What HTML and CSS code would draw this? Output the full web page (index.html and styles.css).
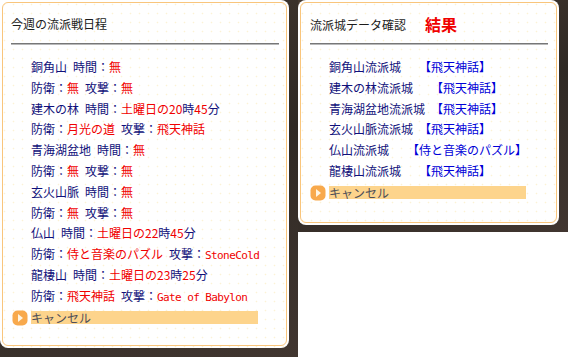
FILE: index.html
```html
<!DOCTYPE html>
<html lang="ja">
<head>
    <meta charset="UTF-8">
    <title>流派戦日程</title>
    <link rel="stylesheet" href="styles.css">
</head>
<body>

<div class="stage">
    <!-- 今週の流派戦日程 -->
    <div class="frame frame-left">
        <div class="window window-left">
            <div class="window-inner">
                <div class="window-title">今週の流派戦日程</div>
                <div class="rule"></div>
                <ul class="rows">
                    <li><span class="name">銅角山</span>&ensp;時間：<span class="red">無</span></li>
                    <li>防衛：<span class="red">無</span>&ensp;攻撃：<span class="red">無</span></li>
                    <li>建木の林&ensp;時間：<span class="red">土曜日の20</span>時<span class="red">45</span>分</li>
                    <li>防衛：<span class="red">月光の道</span>&ensp;攻撃：<span class="red">飛天神話</span></li>
                    <li>青海湖盆地&ensp;時間：<span class="red">無</span></li>
                    <li>防衛：<span class="red">無</span>&ensp;攻撃：<span class="red">無</span></li>
                    <li>玄火山脈&ensp;時間：<span class="red">無</span></li>
                    <li>防衛：<span class="red">無</span>&ensp;攻撃：<span class="red">無</span></li>
                    <li>仏山&ensp;時間：<span class="red">土曜日の22</span>時<span class="red">45</span>分</li>
                    <li>防衛：<span class="red">侍と音楽のパズル</span>&ensp;攻撃：<span class="red mono">StoneCold</span></li>
                    <li>龍棲山&ensp;時間：<span class="red">土曜日の23</span>時<span class="red">25</span>分</li>
                    <li>防衛：<span class="red">飛天神話</span>&ensp;攻撃：<span class="red mono">Gate of Babylon</span></li>
                </ul>
                <div class="cancel">
                    <span class="cancel-icon">
                        <svg width="16" height="16" viewBox="0 0 16 16">
                            <rect x="0.5" y="0.5" width="15" height="15" rx="5" fill="#f8a94c"/>
                            <path d="M6 4 L11 8 L6 12 Z" fill="#fff4e0"/>
                        </svg>
                    </span>
                    <span class="cancel-bar cancel-bar-wide">キャンセル</span>
                </div>
            </div>
        </div>
    </div>

    <!-- 流派城データ確認 -->
    <div class="frame frame-right">
        <div class="window window-right">
            <div class="window-inner">
                <div class="window-title">流派城データ確認<span class="result">結果</span></div>
                <div class="rule rule-right"></div>
                <ul class="rows">
                    <li>銅角山流派城　　<span class="guild">【飛天神話】</span></li>
                    <li>建木の林流派城　　<span class="guild">【飛天神話】</span></li>
                    <li>青海湖盆地流派城　<span class="guild">【飛天神話】</span></li>
                    <li>玄火山脈流派城　<span class="guild">【飛天神話】</span></li>
                    <li>仏山流派城　　<span class="guild">【侍と音楽のパズル】</span></li>
                    <li>龍棲山流派城　　<span class="guild">【飛天神話】</span></li>
                </ul>
                <div class="cancel">
                    <span class="cancel-icon">
                        <svg width="16" height="16" viewBox="0 0 16 16">
                            <rect x="0.5" y="0.5" width="15" height="15" rx="5" fill="#f8a94c"/>
                            <path d="M6 4 L11 8 L6 12 Z" fill="#fff4e0"/>
                        </svg>
                    </span>
                    <span class="cancel-bar cancel-bar-narrow">キャンセル</span>
                </div>
            </div>
        </div>
    </div>
</div>

</body>
</html>
```

FILE: styles.css
```css
body {
    margin: 0;
    padding: 0;
    background-color: #ffffff;
    font-family: "Noto Sans CJK JP", "Noto Sans", sans-serif;
    font-size: 12px;
    color: #10107a;
}

.stage {
    display: flex;
    align-items: flex-start;
    width: 568px;
    height: 357px;
    overflow: hidden;
}

/* dark game background around each window */
.frame {
    background-color: #3b322b;
    background-image: linear-gradient(160deg, #45392f 0%, #2f2924 50%, #413630 100%);
}

.frame-left {
    padding: 0 9px 9px 0;
}

.frame-right {
    padding: 0 9px 7px 0;
}

.window {
    background-color: #ffffff;
    background-image: radial-gradient(circle, #fcf2d6 0.7px, transparent 1.1px);
    background-size: 9px 9px;
    border-radius: 8px;
    box-sizing: border-box;
    padding: 2px;
}

.window-left {
    width: 289px;
    height: 348px;
    border-top-left-radius: 0;
}

.window-right {
    width: 261px;
    height: 225px;
}

.window-inner {
    height: 100%;
    box-sizing: border-box;
    border: 1px solid #f9c57c;
    border-radius: 6px;
    padding-top: 11px;
}

.window-title {
    color: #1c1c1c;
    line-height: 20px;
    height: 20px;
    padding-left: 8px;
    white-space: nowrap;
}

.window-right .window-title {
    padding-left: 9px;
}

.result {
    color: #f00000;
    font-size: 16px;
    font-weight: bold;
    margin-left: 19px;
    vertical-align: -1px;
}

.rule {
    height: 0;
    margin: 9px 7px 0 8px;
    border-top: 1px solid #777777;
    border-bottom: 1px solid #b8b8b8;
}

.rule-right {
    margin: 9px 8px 0 9px;
}

.rows {
    list-style-type: none;
    margin: 12px 0 0 0;
    padding: 0 0 0 28px;
}

.rows li {
    line-height: 20.8px;
    height: 20.8px;
    white-space: nowrap;
}

.red {
    color: #f00000;
}

.mono {
    font-family: "DejaVu Sans Mono", "Liberation Mono", monospace;
    font-size: 11px;
    letter-spacing: -0.6px;
}

.guild {
    color: #0000d8;
}

.cancel {
    display: flex;
    align-items: center;
    margin-top: 3px;
    padding-left: 9px;
    height: 16px;
}

.cancel-icon {
    display: flex;
    width: 16px;
    height: 16px;
}

.cancel-bar {
    margin-left: 3px;
    height: 13px;
    line-height: 13px;
    background-color: #fdd48c;
    color: #4e4e58;
}

.cancel-bar-wide {
    width: 227px;
}

.cancel-bar-narrow {
    width: 197px;
}
```
